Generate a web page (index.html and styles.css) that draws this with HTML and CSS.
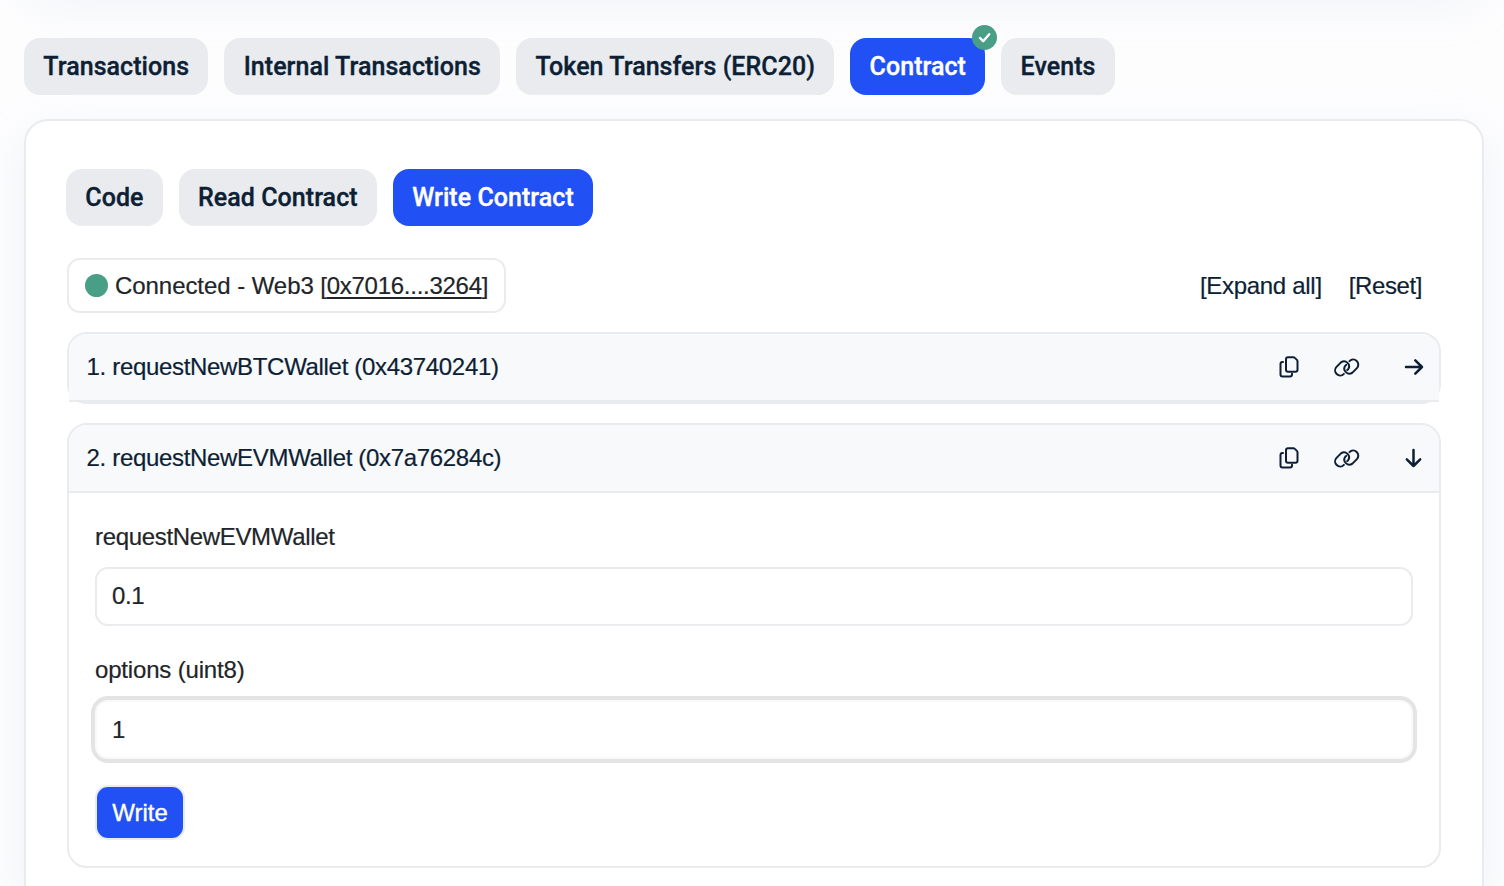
FILE: index.html
```html
<!DOCTYPE html>
<html lang="en">
<head>
<meta charset="utf-8">
<title>Write Contract</title>
<link rel="stylesheet" href="styles.css">
</head>
<body>
<div class="summary-edge"></div>
<svg class="sprite" aria-hidden="true">
  <symbol id="copy" viewBox="0 0 20 22">
    <path d="M9 1.300h5.400a2 2 0 0 1 1.400.6l2.100 2a2 2 0 0 1 .6 1.400v8.400a2 2 0 0 1-2 2H9a2 2 0 0 1-2-2V3.300a2 2 0 0 1 2-2Z"/>
    <path d="M4 6H3.500a2 2 0 0 0-2 2v10.500a2 2 0 0 0 2 2h7.500a2 2 0 0 0 2-2v-.8"/>
  </symbol>
  <symbol id="link" viewBox="0 0 26 21">
    <path d="M9.900 16.900A5 5 0 0 1 2.500 9.900L7 5.400A5 5 0 0 1 14 12.400L13.200 13.100"/>
    <path d="M15.500 4.100A5 5 0 0 1 22.900 11.100L18.400 15.600A5 5 0 0 1 11.400 8.600L12.200 7.900"/>
  </symbol>
</svg>
<main class="page">
  <nav class="tabs">
    <a class="tab">Transactions</a>
    <a class="tab">Internal Transactions</a>
    <a class="tab">Token Transfers (ERC20)</a>
    <a class="tab active">Contract
      <svg class="badge" viewBox="0 0 25 25"><circle cx="12.500" cy="12.500" r="12.500"/><path d="M8 13l3.200 3.200 6-7"/></svg>
    </a>
    <a class="tab">Events</a>
  </nav>
  <section class="card">
    <nav class="tabs">
      <a class="tab">Code</a>
      <a class="tab">Read Contract</a>
      <a class="tab active">Write Contract</a>
    </nav>
    <div class="toolbar">
      <div class="wallet"><i class="dot"></i><span class="wallet-text">Connected - Web3 <span class="address">[<u>0x7016....3264</u>]</span></span></div>
      <div class="actions"><a class="expand">[Expand all]</a><a class="reset">[Reset]</a></div>
    </div>
    <article class="method collapsed">
      <header class="method-head">
        <span class="name">1. requestNewBTCWallet (0x43740241)</span>
        <svg class="icon copy"><use href="#copy"/></svg>
        <svg class="icon link"><use href="#link"/></svg>
        <svg class="icon arrow" viewBox="0 0 20 20"><path d="M2 10h16M11.300 3.400 18 10l-6.700 6.600"/></svg>
      </header>
    </article>
    <article class="method">
      <header class="method-head">
        <span class="name">2. requestNewEVMWallet (0x7a76284c)</span>
        <svg class="icon copy"><use href="#copy"/></svg>
        <svg class="icon link"><use href="#link"/></svg>
        <svg class="icon arrow" viewBox="0 0 20 20"><path d="M9.500 2v16M2.800 11.400 9.500 18l6.700-6.600"/></svg>
      </header>
      <form class="method-body">
        <label class="label-fn" for="amount">requestNewEVMWallet</label>
        <input class="field amount" id="amount" value="0.1">
        <label class="label-opt" for="options">options (uint8)</label>
        <input class="field focused" id="options" value="1">
        <button class="write" type="button">Write</button>
      </form>
    </article>
  </section>
</main>
</body>
</html>
```
FILE: styles.css
```css
* { box-sizing: border-box; }
body {
  margin: 0;
  height: 886px;
  overflow: hidden;
  background: #fdfdfe;
  color: #212529;
  font: 24px/36px "Liberation Sans", Arial, sans-serif;
  -webkit-text-stroke: .2px;
}
.sprite { display: none; }
.summary-edge {
  position: absolute;
  left: 25px;
  top: -60px;
  width: 1459px;
  height: 48px;
  border-radius: 24px;
  box-shadow: 0 16px 48px rgba(180, 195, 214, .16);
}
.page { position: relative; padding: 38px 20px 0 24px; }
.tabs { display: flex; gap: 16px; }
.tab {
  position: relative;
  height: 57px;
  padding: 0 19.300px;
  border-radius: 16px;
  background: #e9ebee;
  color: #0d1f35;
  font: 500 25px/57px Roboto, sans-serif;
  letter-spacing: .05px;
  white-space: nowrap;
  -webkit-text-stroke: .35px;
}
.tab.active { background: #2151f5; color: #fff; }
.badge { position: absolute; right: -12px; top: -13px; width: 25px; height: 25px; }
.badge circle { fill: #489f86; }
.badge path { fill: none; stroke: #fff; stroke-width: 2.400; stroke-linecap: round; stroke-linejoin: round; }
.card {
  height: 767px;
  margin-top: 24px;
  padding: 48px 41px 0 40px;
  border: 2px solid #e9ebee;
  border-bottom: 0;
  border-radius: 24px 24px 0 0;
  background: #fff;
  box-shadow: 0 16px 48px rgba(180, 195, 214, .2);
}
.toolbar {
  display: flex;
  align-items: center;
  justify-content: space-between;
  margin: 32px 0 19px 1px;
}
.wallet {
  display: flex;
  align-items: center;
  width: 439px;
  height: 55px;
  padding: 0 0 0 16px;
  border: 2px solid #e9ebee;
  border-radius: 13px;
  white-space: nowrap;
}
.dot { width: 23px; height: 23px; margin-right: 7px; border-radius: 50%; background: #489f86; }
.wallet-text { letter-spacing: -.06px; }
.address { letter-spacing: -.27px; }
.wallet u { text-underline-offset: 3px; text-decoration-thickness: 2px; }
.actions { display: flex; gap: 27px; padding-right: 19px; color: #0d1f35; }
.expand { letter-spacing: -.3px; }
.reset { letter-spacing: -.4px; }
.method {
  height: 445px;
  margin: 0 0 19px 1px;
  border: 2px solid #e9ebee;
  border-radius: 20px;
  background: #fff;
}
.method.collapsed { height: 72px; }
.method-head {
  display: flex;
  align-items: center;
  height: 68px;
  padding: 0 15px 0 17.500px;
  border-bottom: 2px solid #e9ebee;
  border-radius: 18px 18px 0 0;
  background: #f8f9fb;
  color: #0d1f35;
}
.name { flex: 1; letter-spacing: -.32px; white-space: nowrap; }
.icon { flex: none; fill: none; stroke: #0d1f35; stroke-width: 2; stroke-linecap: round; stroke-linejoin: round; }
.copy { width: 20px; height: 22px; margin-right: 35px; }
.link { width: 26px; height: 21px; margin-right: 44px; }
.arrow { width: 20px; height: 20px; stroke-width: 2.500; }
.method-body { display: flex; flex-direction: column; align-items: flex-start; padding: 26px 26px 0; }
.method-body label { height: 36px; margin-bottom: 12px; }
.label-fn { letter-spacing: -.33px; }
.label-opt { letter-spacing: -.17px; }
.field {
  width: 100%;
  height: 59px;
  margin-bottom: 26px;
  padding: 0 15px;
  border: 2px solid #e9ebee;
  border-radius: 13px;
  outline: none;
  background: #fff;
  color: #212529;
  font: inherit;
}
.field.amount { padding-bottom: 2px; letter-spacing: -.4px; }
.field.focused { border-color: #f9f9f9; box-shadow: 0 0 0 4px #e4e4e4; }
.write {
  width: 90px;
  height: 55px;
  padding: 0;
  border: 2px solid #e9ebee;
  border-radius: 13px;
  background: #2151f5;
  color: #fff;
  font: inherit;
  -webkit-text-stroke: .35px;
}
```
